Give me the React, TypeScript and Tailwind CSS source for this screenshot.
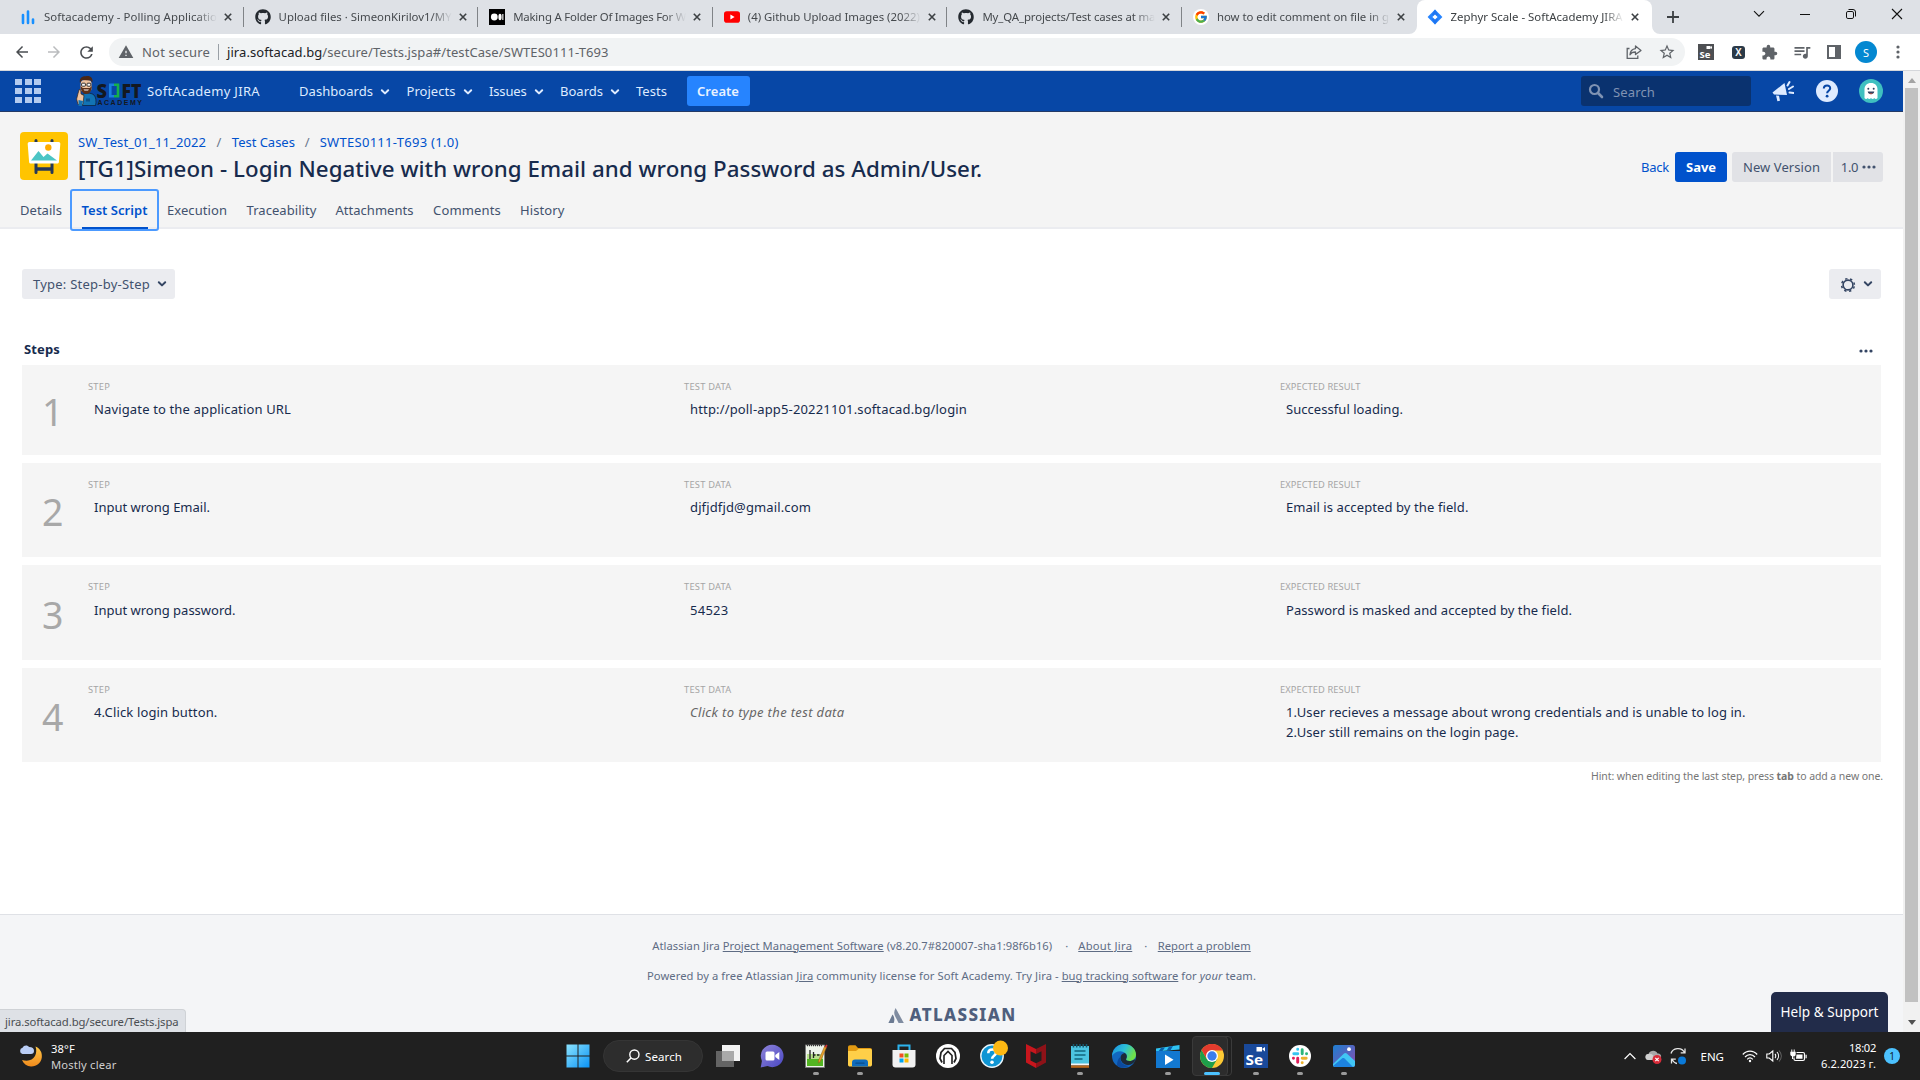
import React, { useLayoutEffect, useRef, useState } from 'react';
import { FaGithub } from 'react-icons/fa';
import { FcGoogle } from 'react-icons/fc';
import {
  MdArrowBack,
  MdArrowForward,
  MdExtension,
  MdQueueMusic,
  MdRefresh,
  MdStarBorder,
  MdWarning,
} from 'react-icons/md';

type TProps = { w?: number; className?: string; children: React.ReactNode };

/* A single line of text whose tracking is tuned so that it spans `w` pixels. */
function T({ w, className = '', children }: TProps) {
  const ref = useRef<HTMLSpanElement>(null);
  const [spacing, setSpacing] = useState(0);
  useLayoutEffect(() => {
    const el = ref.current;
    if (!el || !w) return;
    const count = (el.textContent || '').length;
    const natural = el.getBoundingClientRect().width;
    setSpacing((w - natural) / count);
  }, [w]);
  return (
    <span
      ref={ref}
      className={`inline-block shrink-0 whitespace-pre ${className}`}
      style={{ letterSpacing: `${spacing}px` }}
    >
      {children}
    </span>
  );
}

function Close({ className = '' }: { className?: string }) {
  return (
    <svg viewBox="0 0 10 10" className={`h-2 w-2 shrink-0 ${className}`}>
      <path d="M1 1l8 8M9 1l-8 8" stroke="#3c4043" strokeWidth="2" fill="none" />
    </svg>
  );
}

function Chevron({ className = '' }: { className?: string }) {
  return (
    <svg viewBox="0 0 10 8" className={`h-2 w-2.5 shrink-0 ${className}`}>
      <path d="M1.8 2.2L5 5.4l3.2-3.2" stroke="currentColor" strokeWidth="2" fill="none" strokeLinecap="round" strokeLinejoin="round" />
    </svg>
  );
}

function Dots({ className = '' }: { className?: string }) {
  return (
    <svg viewBox="0 0 14 4" className={`h-1 w-3.5 shrink-0 ${className}`}>
      <circle cx="2" cy="2" r="1.6" fill="currentColor" />
      <circle cx="7" cy="2" r="1.6" fill="currentColor" />
      <circle cx="12" cy="2" r="1.6" fill="currentColor" />
    </svg>
  );
}

/* ---------- Browser tab strip ---------- */

const BarsIcon = () => (
  <svg viewBox="0 0 16 16" className="h-4 w-4">
    <path d="M3 6v8M8 2.5V14M13 10.5V14" stroke="#1890ff" strokeWidth="2.6" strokeLinecap="round" />
  </svg>
);
const MediumIcon = () => (
  <svg viewBox="0 0 16 16" className="h-4 w-4">
    <rect width="16" height="16" fill="#000" />
    <circle cx="5.3" cy="8" r="3.4" fill="#fff" />
    <ellipse cx="11" cy="8" rx="1.6" ry="3.2" fill="#fff" />
    <rect x="13.3" y="5" width="1.1" height="6" fill="#fff" />
  </svg>
);
const YoutubeIcon = () => (
  <svg viewBox="0 0 16 16" className="h-4 w-4">
    <rect y="2.3" width="16" height="11.4" rx="2.8" fill="#f00" />
    <path d="M6.4 5.6L10.6 8l-4.2 2.4z" fill="#fff" />
  </svg>
);
const GoogleIcon = () => (
  <span className="flex h-4 w-4 items-center justify-center rounded-full bg-white">
    <FcGoogle className="h-3.5 w-3.5" />
  </span>
);
const JiraIcon = () => (
  <svg viewBox="0 0 16 16" className="h-4 w-4">
    <path d="M8 .6L15.4 8 8 15.4.6 8z" fill="#2684ff" />
    <path d="M8 .6L11 5.4 8 8 5 5.4zM8 15.4l3-4.8L8 8l-3 2.6z" fill="#1f75f0" />
    <path d="M8 5.4L10.6 8 8 10.6 5.4 8z" fill="#fff" />
  </svg>
);

const TABS = [
  { icon: <BarsIcon />, title: 'Softacademy - Polling Applicatio', w: 173 },
  { icon: <FaGithub className="h-4 w-4 text-[#24292f]" />, title: 'Upload files · SimeonKirilov1/MY', w: 173 },
  { icon: <MediumIcon />, title: 'Making A Folder Of Images For W', w: 173 },
  { icon: <YoutubeIcon />, title: '(4) Github Upload Images (2022)', w: 172 },
  { icon: <FaGithub className="h-4 w-4 text-[#24292f]" />, title: 'My_QA_projects/Test cases at ma', w: 173 },
  { icon: <GoogleIcon />, title: 'how to edit comment on file in g', w: 172 },
];

function TabBody({ icon, title, w }: { icon: React.ReactNode; title: string; w: number }) {
  return (
    <>
      <span className="flex w-4 shrink-0 justify-center">{icon}</span>
      <span className="ml-2 w-[173px] shrink-0 [mask-image:linear-gradient(to_right,black_88%,transparent_100%)]">
        <T w={w}>{title}</T>
      </span>
      <Close className="ml-[7px]" />
    </>
  );
}

function TabStrip() {
  return (
    <div className="flex h-[34px] shrink-0 bg-[#dee1e6] pl-[9px] text-[11.4px] text-[#45494d]">
      {TABS.map((t, i) => (
        <div key={t.title} className="flex w-[234.6px] shrink-0 items-center pl-[11px]">
          <TabBody {...t} />
          {i < 5 && <span className="ml-auto h-5 w-px bg-[#808387]" />}
        </div>
      ))}
      <div className="relative flex w-[235px] shrink-0 items-center rounded-t-lg bg-white pl-[10px] text-[#3c4043]">
        <svg viewBox="0 0 8 8" className="absolute bottom-0 -left-2 h-2 w-2">
          <path d="M8 0v8H0a8 8 0 0 0 8-8z" fill="#fff" />
        </svg>
        <svg viewBox="0 0 8 8" className="absolute -right-2 bottom-0 h-2 w-2">
          <path d="M0 0v8h8a8 8 0 0 1-8-8z" fill="#fff" />
        </svg>
        <TabBody icon={<JiraIcon />} title="Zephyr Scale - SoftAcademy JIRA" w={172} />
      </div>
      <svg viewBox="0 0 12 12" className="mt-[11px] ml-[15px] h-3 w-3">
        <path d="M6 0v12M0 6h12" stroke="#3c4043" strokeWidth="1.8" />
      </svg>
      <div className="mr-[17px] ml-auto flex h-7 items-center text-[#111]">
        <svg viewBox="0 0 12 12" className="mr-[35px] h-3 w-3">
          <path d="M1 3.2l5 5 5-5" stroke="currentColor" strokeWidth="1.1" fill="none" />
        </svg>
        <svg viewBox="0 0 10 10" className="mr-[36px] h-2.5 w-2.5">
          <path d="M0 5.5h10" stroke="currentColor" />
        </svg>
        <svg viewBox="0 0 10 10" className="mr-[35px] h-2.5 w-2.5">
          <rect x=".5" y="2.5" width="7" height="7" rx="1.4" stroke="currentColor" fill="none" />
          <path d="M2.5.5H7A2.5 2.5 0 0 1 9.5 3v4.5" stroke="currentColor" fill="none" />
        </svg>
        <svg viewBox="0 0 12 12" className="h-3 w-3">
          <path d="M1 1l10 10M11 1L1 11" stroke="currentColor" strokeWidth="1.1" />
        </svg>
      </div>
    </div>
  );
}

/* ---------- Address bar ---------- */

function AddressBar() {
  return (
    <div className="flex h-[37px] shrink-0 items-center border-b border-[#d5d7db] bg-white text-[13px] text-[#5f6368]">
      <MdArrowBack className="ml-[13px] h-[18px] w-[18px] text-[#4a4d51]" />
      <MdArrowForward className="ml-[14px] h-[18px] w-[18px] text-[#babcbe]" />
      <MdRefresh className="ml-[14px] h-[19px] w-[19px] text-[#4a4d51]" />
      <div className="ml-[13px] flex h-7 w-[1576px] items-center rounded-full bg-[#f1f3f4]">
        <MdWarning className="ml-[9px] h-4 w-4" />
        <T w={68} className="ml-2 pt-px">Not secure</T>
        <span className="ml-2 h-4 w-px bg-[#9aa0a6]" />
        <T w={381.5} className="ml-[8px] pt-px">
          <span className="text-[#202124]">jira.softacad.bg</span>/secure/Tests.jspa#/testCase/SWTES0111-T693
        </T>
        <svg viewBox="0 0 16 16" className="mr-4 ml-auto h-4 w-4" fill="none" stroke="#5f6368" strokeWidth="1.3">
          <path d="M3.5 4.5H1.2v9.8h10.6v-2.8" />
          <path d="M9.5 2l5.5 4.4-5.5 4.2V8C7 8 5 8.8 4 10.8c.2-3.6 2-5.8 5.5-6.2z" strokeLinejoin="round" />
        </svg>
        <MdStarBorder className="mr-[9px] h-[18px] w-[18px]" />
      </div>
      <svg viewBox="0 0 16 16" className="ml-[13px] h-4 w-4 font-['Open_Sans'] font-bold">
        <rect width="16" height="16" fill="#4d4f52" />
        <rect x="8.5" y="2" width="4" height="3" fill="#fff" />
        <path d="M12 3.5L14 2v3z" fill="#fff" />
        <text x="1.5" y="14" fontSize="9.5" fill="#fff">Se</text>
      </svg>
      <div className="ml-[18px] flex h-[13px] w-[13px] items-center justify-center rounded-[3px] bg-[#2b3a48] text-[10px] leading-none font-semibold text-white">
        X
      </div>
      <MdExtension className="ml-[16px] h-[17px] w-[17px]" />
      <MdQueueMusic className="ml-[14px] h-[20px] w-[20px]" />
      <svg viewBox="0 0 14 14" className="ml-[15px] h-3.5 w-3.5">
        <path d="M1 1h12v12H1z" fill="none" stroke="#5f6368" strokeWidth="2" />
        <path d="M8 1h5v12H8z" fill="#5f6368" />
      </svg>
      <span className="ml-[14px] flex h-[22px] w-[22px] items-center justify-center rounded-full bg-[#0488d1] text-[11px] leading-none text-white">
        S
      </span>
      <svg viewBox="0 0 4 14" className="ml-[19px] h-3.5 w-1">
        <circle cx="2" cy="2" r="1.6" fill="#5f6368" />
        <circle cx="2" cy="7" r="1.6" fill="#5f6368" />
        <circle cx="2" cy="12" r="1.6" fill="#5f6368" />
      </svg>
    </div>
  );
}

/* ---------- Jira header ---------- */

function SoftLogo() {
  return (
    <svg viewBox="0 0 66 32" className="ml-[35px] h-8 w-[66px] shrink-0 overflow-visible">
      <path d="M6 20c3-2.500 9-2.500 12 0 2 2 2.500 7 1.500 10.500H6.500z" fill="#1273b4" stroke="#0b1d33" strokeWidth=".7" />
      <path d="M2 18.500l1.200-4 1.600.4L5 19l3 1.500-1.200 9L2 29.500.6 24z" fill="#efc3a0" stroke="#3a2418" strokeWidth=".7" />
      <path d="M2.500 25l4.500 1-1 5H2.500z" fill="#1273b4" />
      <rect x="4.600" y="5" width="11" height="12" rx="4" fill="#efc3a0" />
      <path d="M4 8C3 3 6 .8 10 1.200 14.500.5 17.300 3 16.300 8L15 5.500 6 5z" fill="#4a2716" />
      <path d="M4.600 11c0 5 2.500 8 5.700 8s5.500-3 5.500-8l-2 2H6.800z" fill="#5c3018" />
      <path d="M7.500 14.400h5.400c-.5 1.600-4.900 1.600-5.400 0z" fill="#fff" />
      <rect x="5.600" y="8.200" width="3.800" height="3" rx=".8" fill="#fff" stroke="#1a1a1a" strokeWidth=".9" />
      <rect x="11" y="8.200" width="3.800" height="3" rx=".8" fill="#fff" stroke="#1a1a1a" strokeWidth=".9" />
      <path d="M10 23.500h4v3h-4z" fill="#0c4f86" />
      <text x="20.500" y="22.500" fontSize="20" fontWeight="800" textLength="10.500" lengthAdjust="spacingAndGlyphs" fill="#14181f" className="font-['Open_Sans']">S</text>
      <path d="M38 9.700H34.300v11.600H38" fill="none" stroke="#1a7fe0" strokeWidth="2.600" />
      <path d="M38 9.700h4v11.600h-4" fill="none" stroke="#16b04a" strokeWidth="2.600" />
      <text x="45.500" y="22.500" fontSize="20" fontWeight="800" textLength="20" lengthAdjust="spacingAndGlyphs" fill="#14181f" className="font-['Open_Sans']">FT</text>
      <text x="21.500" y="30.300" fontSize="7" fontWeight="700" letterSpacing="1.500" fill="#14181f" className="font-['Liberation_Sans']">ACADEMY</text>
    </svg>
  );
}

const NAV = [
  { label: 'Dashboards', w: 74, box: 'w-[107.5px]' },
  { label: 'Projects', w: 49, box: 'w-[82.5px]' },
  { label: 'Issues', w: 37.5, box: 'w-[71px]' },
  { label: 'Boards', w: 43, box: 'w-[76px]' },
];

function JiraHeader() {
  return (
    <div className="flex h-[41px] shrink-0 items-center border-b border-[#243a66] bg-[#0747a6] text-[13px] text-[#deebff]">
      <div className="ml-[15px] grid shrink-0 grid-cols-3 gap-x-[2.5px] gap-y-[3px]">
        {Array.from({ length: 9 }, (_, i) => (
          <span key={i} className="h-1.5 w-[7px] bg-[#b3cbef]" />
        ))}
      </div>
      <SoftLogo />
      <T w={113} className="ml-[5px] pt-0.5">SoftAcademy JIRA</T>
      <div className="ml-[39px] flex">
        {NAV.map((n) => (
          <span key={n.label} className={`flex items-center gap-[7px] ${n.box}`}>
            <T w={n.w} className="pt-0.5">{n.label}</T>
            <Chevron className="mt-px" />
          </span>
        ))}
      </div>
      <T w={31} className="pt-0.5">Tests</T>
      <span className="ml-[19.5px] flex h-[30px] w-[63px] items-center justify-center rounded-[3px] bg-[#2684ff]">
        <T w={42} className="pt-0.5 font-semibold text-[#e9f2ff]">Create</T>
      </span>
      <div className="ml-auto flex h-[30px] w-[170px] items-center rounded-[3px] bg-[#0a326f] text-[#8093b3]">
        <svg viewBox="0 0 16 16" className="ml-[7px] h-4 w-4">
          <circle cx="6.500" cy="6.500" r="4.500" stroke="currentColor" strokeWidth="2.200" fill="none" />
          <path d="M10 10l4 4" stroke="currentColor" strokeWidth="2.600" strokeLinecap="round" />
        </svg>
        <T w={42} className="ml-[9px] pt-1">Search</T>
      </div>
      <svg viewBox="0 0 22 22" className="ml-[21px] h-[22px] w-[22px]" fill="#deebff">
        <path d="M.5 12.500L12.500 3l2.500 12-13-.5z" />
        <path d="M4 15.500l3 .3 1 5-2.600.4z" />
        <path d="M15.500 5.500L17.500 2M17 9l4-2.500M17.500 12.500l4 .5" stroke="#deebff" strokeWidth="2" strokeLinecap="round" />
      </svg>
      <svg viewBox="0 0 22 22" className="ml-[22px] h-[22px] w-[22px]">
        <circle cx="11" cy="11" r="11" fill="#deebff" />
        <path d="M7.800 8.600c.1-4.200 6.600-4 6.400-.2-.1 2.300-3.100 2.300-3.100 4.800" stroke="#0747a6" strokeWidth="2" fill="none" />
        <circle cx="11.100" cy="16.200" r="1.400" fill="#0747a6" />
      </svg>
      <svg viewBox="0 0 24 24" className="mr-[20px] ml-[21px] h-6 w-6">
        <circle cx="12" cy="12" r="12" fill="#3fc0c0" />
        <path d="M5.500 19v-8.500C5.500 6.500 8 4 12 4s6.500 2.500 6.500 6.500V19c-1 1.300-2.400 1.200-3.200 0-1 1.300-2.300 1.300-3.300 0-1 1.300-2.300 1.300-3.300 0-.8 1.200-2.200 1.300-3.200 0z" fill="#fff" />
        <circle cx="9.300" cy="9.700" r="1" fill="#344563" />
        <circle cx="14.700" cy="9.700" r="1" fill="#344563" />
        <path d="M8.700 12.500h6.600c-.4 3.600-6.200 3.600-6.600 0z" fill="#344563" />
        <path d="M10.300 14.600c1 .9 2.500.9 3.400 0z" fill="#ff5630" />
      </svg>
    </div>
  );
}

/* ---------- Test case heading ---------- */

function ProjectAvatar() {
  return (
    <svg viewBox="0 0 48 48" className="h-12 w-12 shrink-0">
      <rect width="48" height="48" rx="4" fill="#ffc400" />
      <path d="M16 8.500v32M32 8.500v32" stroke="#253858" strokeWidth="3" strokeLinecap="round" />
      <path d="M16 37h16" stroke="#253858" strokeWidth="3.500" />
      <path d="M9.500 10h29c1.200 0 2 .8 1.800 2l-1.400 18c-.1 1-1 1.600-1.800 1.600H10.900c-.9 0-1.700-.6-1.800-1.600L7.700 12c-.1-1.200.7-2 1.800-2z" fill="#fff" />
      <path d="M11 28.500l7.500-9.500 5 6 4-3.500 9.500 7z" fill="#4cc5c5" />
      <circle cx="28.300" cy="15.500" r="3.200" fill="#ffab00" />
    </svg>
  );
}

function CaseHeading() {
  return (
    <div className="relative z-10 flex h-[117px] shrink-0 flex-col border-b-2 border-[#ebecf0] bg-[#f4f4f4] text-[13px] text-[#42526e]">
      <div className="mt-5 flex h-12 pl-5">
        <ProjectAvatar />
        <div className="ml-[10px] flex flex-col">
          <div className="flex h-5 items-center pt-0.5 text-[#0052cc]">
            <T w={128}>SW_Test_01_11_2022</T>
            <span className="mx-[10.5px] text-[#6b778c]">/</span>
            <T w={63}>Test Cases</T>
            <span className="mx-[10px] text-[#6b778c]">/</span>
            <T w={139}>SWTES0111-T693 (1.0)</T>
          </div>
          <div className="mt-[2px] flex h-[30px] items-center text-[22.3px] leading-[30px] font-medium text-[#172b4d]">
            <T w={904}>[TG1]Simeon - Login Negative with wrong Email and wrong Password as Admin/User.</T>
          </div>
        </div>
        <div className="mt-[20px] mr-[20px] ml-auto flex h-[30px] items-center">
          <T w={28} className="pt-0.5 text-[#0052cc]">Back</T>
          <span className="ml-[6px] flex h-[30px] w-[52px] items-center justify-center rounded-[3px] bg-[#0052cc] font-bold text-white">
            <T w={30} className="pt-0.5">Save</T>
          </span>
          <span className="ml-[5px] flex h-[30px] w-[99px] items-center justify-center rounded-l-[3px] bg-[#e1e2e6]">
            <T w={77} className="pt-0.5">New Version</T>
          </span>
          <span className="ml-0.5 flex h-[30px] w-[50px] items-center justify-center gap-[4px] rounded-r-[3px] bg-[#e1e2e6] pl-px">
            <T w={17.5} className="pt-0.5">1.0</T>
            <Dots />
          </span>
        </div>
      </div>
      <div className="mt-[9px] flex h-[42px] shrink-0 items-center pl-5">
        <T w={42} className="pt-0.5">Details</T>
        <div className="ml-2 flex h-[42px] w-[89px] flex-col items-center rounded-[3px] border-2 border-[#4c9aff]">
          <span className="flex h-[38px] items-center border-b-2 border-[#0052cc] pt-1 font-semibold text-[#0052cc]">
            <T w={66}>Test Script</T>
          </span>
        </div>
        <T w={60} className="ml-2 pt-0.5">Execution</T>
        <T w={70} className="ml-[19.5px] pt-0.5">Traceability</T>
        <T w={78} className="ml-[19px] pt-0.5">Attachments</T>
        <T w={68} className="ml-[19.5px] pt-0.5">Comments</T>
        <T w={44.5} className="ml-[19px] pt-0.5">History</T>
      </div>
    </div>
  );
}

/* ---------- Steps ---------- */

type Field = { lines: string[]; widths: number[]; hint?: boolean };
const STEPS: { n: number; box: string; body: string; fields: Field[] }[] = [
  {
    n: 1,
    box: 'h-[90px]',
    body: 'mt-[6px]',
    fields: [
      { lines: ['Navigate to the application URL'], widths: [197] },
      { lines: ['http://poll-app5-20221101.softacad.bg/login'], widths: [277] },
      { lines: ['Successful loading.'], widths: [117] },
    ],
  },
  {
    n: 2,
    box: 'h-[94px]',
    body: 'mt-[6px]',
    fields: [
      { lines: ['Input wrong Email.'], widths: [116] },
      { lines: ['djfjdfjd@gmail.com'], widths: [121] },
      { lines: ['Email is accepted by the field.'], widths: [182.5] },
    ],
  },
  {
    n: 3,
    box: 'h-[95px]',
    body: 'mt-[7px]',
    fields: [
      { lines: ['Input wrong password.'], widths: [141.5] },
      { lines: ['54523'], widths: [38.5] },
      { lines: ['Password is masked and accepted by the field.'], widths: [286] },
    ],
  },
  {
    n: 4,
    box: 'h-[94px]',
    body: 'mt-[6px]',
    fields: [
      { lines: ['4.Click login button.'], widths: [123.5] },
      { lines: ['Click to type the test data'], widths: [154.5], hint: true },
      {
        lines: ['1.User recieves a message about wrong credentials and is unable to log in.', '2.User still remains on the login page.'],
        widths: [459.5, 232.5],
      },
    ],
  },
];
const LABELS = [
  { text: 'STEP', w: 22 },
  { text: 'TEST DATA', w: 47.5 },
  { text: 'EXPECTED RESULT', w: 80.5 },
];

function Steps() {
  return (
    <div className="flex flex-col gap-2">
      {STEPS.map((s) => (
        <div key={s.n} className={`flex bg-[#f5f5f5] ${s.box}`}>
          <div className="flex w-[66px] items-center pt-[4px] pl-[20px] text-[37.5px] leading-none text-[#a8a8a8]">{s.n}</div>
          {s.fields.map((f, i) => (
            <div key={LABELS[i].text} className="w-[596px] shrink-0 pt-[16px]">
              <div className="h-3 text-[9.3px] leading-3 text-[#a5a5a5]">
                <T w={LABELS[i].w}>{LABELS[i].text}</T>
              </div>
              <div className={`flex flex-col pl-[6px] text-[13px] leading-5 ${s.body} ${f.hint ? 'text-[#666] italic' : 'text-[#172b4d]'}`}>
                {f.lines.map((line, k) => (
                  <span key={line} className="h-5">
                    <T w={f.widths[k]}>{line}</T>
                  </span>
                ))}
              </div>
            </div>
          ))}
        </div>
      ))}
    </div>
  );
}

function GearIcon() {
  return (
    <svg viewBox="0 0 16 16" className="mt-0.5 h-4 w-4">
      <circle cx="8" cy="8" r="4.9" fill="none" stroke="#344563" strokeWidth="1.6" />
      <circle cx="8" cy="8" r="6.4" fill="none" stroke="#344563" strokeWidth="1.5" strokeDasharray="2.3 2.727" strokeDashoffset="-1.36" />
    </svg>
  );
}

function Content() {
  return (
    <div className="flex flex-1 flex-col bg-white pr-[22px] pl-[22px] text-[13px] text-[#42526e]">
      <div className="mt-[40px] flex h-[30px] justify-between">
        <span className="flex w-[153px] items-center rounded-[3px] bg-[#ebecf0]">
          <T w={117} className="ml-[11px] pt-0.5">Type: Step-by-Step</T>
          <Chevron className="ml-[7px] text-[#344563]" />
        </span>
        <span className="flex w-[52px] items-center rounded-[3px] bg-[#ebecf0] pl-[11px]">
          <GearIcon />
          <Chevron className="ml-[7px] text-[#344563]" />
        </span>
      </div>
      <div className="mt-[40px] flex h-5 items-center justify-between pr-[8px] pl-[2px] text-[#172b4d]">
        <T w={36} className="pt-0.5 font-bold">Steps</T>
        <Dots className="mt-1 text-[#344563]" />
      </div>
      <div className="mt-[6px]">
        <Steps />
      </div>
      <div className="mt-[5px] -mr-0.5 flex h-5 items-center justify-end text-[10.5px] text-[#767676]">
        <T w={292}>
          Hint: when editing the last step, press <b>tab</b> to add a new one.
        </T>
      </div>
    </div>
  );
}

function Footer() {
  return (
    <div className="flex h-[118px] shrink-0 flex-col items-center border-t border-[#dfe1e6] bg-[#f4f5f7] text-[11.2px] text-[#5e6c84]">
      <div className="mt-[21px] flex h-5 items-center">
        <T w={400}>
          Atlassian Jira <span className="underline">Project Management Software</span> (v8.20.7#820007-sha1:98f6b16)
        </T>
        <span className="w-[26px] pl-[13px]">·</span>
        <T w={54} className="underline">About Jira</T>
        <span className="w-[25.5px] pl-[12px]">·</span>
        <T w={93} className="underline">Report a problem</T>
      </div>
      <div className="mt-[10px] flex h-5 items-center">
        <T w={609}>
          Powered by a free Atlassian <span className="underline">Jira</span> community license for Soft Academy. Try Jira - <span className="underline">bug tracking software</span> for <i>your</i> team.
        </T>
      </div>
      <div className="mt-[19px] flex h-5 items-center pl-px">
        <svg viewBox="0 0 16 15" className="h-[15px] w-4">
          <path d="M4.500 6.500c1.800 2 2.500 5 1.200 8.500H.4z" fill="#6b7a92" />
          <path d="M7.600 0L15.800 15h-5.200L7 8C5.800 5.500 6 3 7.600 0z" fill="#7f8ca1" />
        </svg>
        <T w={107} className="ml-[6px] text-[17px] leading-5 font-extrabold text-[#4f5f7d]">ATLASSIAN</T>
      </div>
    </div>
  );
}

function Scrollbar() {
  return (
    <div className="flex w-[17px] shrink-0 flex-col items-center bg-[#f1f1f1]">
      <svg viewBox="0 0 8 5" className="mt-[7px] h-[5px] w-2">
        <path d="M0 5l4-5 4 5z" fill="#a3a3a3" />
      </svg>
      <div className="mt-[5px] h-[914px] w-[13px] bg-[#c1c1c1]" />
      <svg viewBox="0 0 8 5" className="mt-auto mb-[7px] h-[5px] w-2">
        <path d="M0 0l4 5 4-5z" fill="#505050" />
      </svg>
    </div>
  );
}

/* ---------- Windows taskbar ---------- */

const WindowsIcon = () => (
  <svg viewBox="0 0 24 24" className="h-6 w-6">
    <defs>
      <linearGradient id="win" x1="0" y1="0" x2="1" y2="1">
        <stop offset="0" stopColor="#8be3ff" />
        <stop offset="1" stopColor="#0a93f5" />
      </linearGradient>
    </defs>
    <path d="M.5.5h11v11H.5zM12.500.5h11v11h-11zM.5 12.500h11v11H.5zM12.500 12.500h11v11h-11z" fill="url(#win)" />
  </svg>
);
const TaskViewIcon = () => (
  <svg viewBox="0 0 24 24" className="h-6 w-6">
    <rect x="6" y="1" width="18" height="16" fill="#f2f2f2" />
    <rect y="7" width="18" height="16" fill="#6b6b6b" fillOpacity=".9" />
    <rect x="6" y="7" width="12" height="10" fill="#a9a9a9" />
  </svg>
);
const ChatIcon = () => (
  <svg viewBox="0 0 24 24" className="h-6 w-6">
    <defs>
      <linearGradient id="chat" x1="0" y1="0" x2="1" y2="1">
        <stop offset="0" stopColor="#8e83d8" />
        <stop offset="1" stopColor="#4a48c4" />
      </linearGradient>
    </defs>
    <path d="M12.500.8a11.200 11.200 0 1 1-5 21.300L.7 23.400l1.200-6.500A11.200 11.200 0 0 1 12.500.8z" fill="url(#chat)" />
    <rect x="5.500" y="7.500" width="9" height="9" rx="1.500" fill="#fff" />
    <path d="M15.300 11l4-3v8l-4-3z" fill="#fff" />
  </svg>
);
const NotepadPlusIcon = () => (
  <svg viewBox="0 0 24 24" className="h-6 w-6">
    <rect x="1.500" y="1" width="19" height="22.500" fill="#eef3ea" stroke="#777" strokeWidth=".8" />
    <path d="M3 12l16 3v7H3z" fill="#53b522" />
    <path d="M3 10h16v5H3z" fill="#b8e08a" />
    <path d="M6 6v9M9.500 8v6M9 11h2.500M13 11h2.500" stroke="#222" strokeWidth="1.300" />
    <path d="M20.500 2.500L14.500 16.500l-.2 2.500 2-1.600L22.500 3.500z" fill="#e7a02c" stroke="#8a5a12" strokeWidth=".5" />
    <path d="M20.500 2.500l2-2 1 1-1 2.200z" fill="#c33" />
    <path d="M3 1.500h15" stroke="#333" strokeDasharray="1 1" strokeWidth="1.500" />
  </svg>
);
const FolderIcon = () => (
  <svg viewBox="0 0 24 24" className="h-6 w-6">
    <path d="M0 3.500C0 2 .8 1.300 2 1.300h5.500L10 4h12c1.300 0 2 .8 2 2v6H0z" fill="#e29a12" />
    <path d="M0 7h8l2.500-2H22c1.200 0 2 .6 2 1.800v13.900c0 1.200-.8 1.800-2 1.800H2c-1.200 0-2-.6-2-1.800z" fill="#ffcf48" />
    <path d="M4 22.500v-4c0-1.800 1-3 3-3h10c2 0 3 1.200 3 3v4z" fill="#0f6cbd" />
    <path d="M8 19.200h8" stroke="#0a4c8a" strokeWidth="1.300" strokeLinecap="round" />
  </svg>
);
const StoreIcon = () => (
  <svg viewBox="0 0 24 24" className="h-6 w-6">
    <path d="M6.500 7V1.500h11V7" fill="none" stroke="#2cb3ee" strokeWidth="2" />
    <path d="M.5 6h23v14.500c0 2-1 3-3 3h-17c-2 0-3-1-3-3z" fill="#f1f1f1" />
    <path d="M7.500 9.500h4v4h-4z" fill="#f25022" />
    <path d="M12.500 9.500h4v4h-4z" fill="#7fba00" />
    <path d="M7.500 14.500h4v4h-4z" fill="#00a4ef" />
    <path d="M12.500 14.500h4v4h-4z" fill="#ffb900" />
  </svg>
);
const HelmetIcon = () => (
  <svg viewBox="0 0 24 24" className="h-6 w-6">
    <circle cx="12" cy="12" r="12" fill="#fff" />
    <path d="M6 18.500l-2-4 1-6L8.500 4.500h7L19 8.500l1 6-2 4" fill="none" stroke="#202020" strokeWidth="1.700" />
    <path d="M8 20V11.500L12 7.500l4 4V20" fill="none" stroke="#202020" strokeWidth="1.600" />
  </svg>
);
const GetHelpIcon = () => (
  <svg viewBox="0 0 28 28" className="-mt-1 ml-1 h-7 w-7">
    <circle cx="12" cy="16" r="11.200" fill="#0e95d4" stroke="#e8f4fa" strokeWidth="1.400" />
    <path d="M8.300 13.200c.1-5 7.800-4.800 7.600-.2-.1 2.800-3.800 2.800-3.800 5.700" stroke="#fff" strokeWidth="2.600" fill="none" />
    <circle cx="12" cy="22.300" r="1.800" fill="#fff" />
    <circle cx="20.500" cy="8" r="7.500" fill="#fdb813" />
  </svg>
);
const McAfeeIcon = () => (
  <svg viewBox="0 0 24 24" className="h-6 w-6">
    <path d="M2 0l10 5v5l-5.500-2.800v9.300L12 19.200V24L2 18.500z" fill="#c8161d" />
    <path d="M22 0L12 5v5l5.500-2.800v9.300L12 19.200V24l10-5.500z" fill="#8e1218" />
  </svg>
);
const NotepadIcon = () => (
  <svg viewBox="0 0 24 24" className="h-6 w-6">
    <rect x="3" y="2" width="18" height="18" fill="#4cc3e0" />
    <rect x="3" y="19.500" width="18" height="2" fill="#f4f4f4" />
    <rect x="3" y="21.500" width="18" height="2.300" fill="#b8681c" />
    <path d="M5.500 0v3.500M8.700 0v3.500M12 0v3.500M15.200 0v3.500M18.500 0v3.500" stroke="#15586e" strokeWidth="1.500" />
    <path d="M6.500 7h11M6.500 11h11M6.500 15h8" stroke="#12657e" strokeWidth="1.600" />
  </svg>
);
const EdgeIcon = () => (
  <svg viewBox="0 0 24 24" className="h-6 w-6">
    <defs>
      <linearGradient id="edgeTop" x1="0" y1="0" x2="1" y2=".4">
        <stop offset="0" stopColor="#1b8fe0" />
        <stop offset=".55" stopColor="#2cc0d8" />
        <stop offset="1" stopColor="#6fe04a" />
      </linearGradient>
    </defs>
    <circle cx="12" cy="12" r="12" fill="#1267c0" />
    <path d="M0 12C.5 5 5.500 0 12 0c7 0 12 5 12 10.500 0 4-3 6.500-6.500 6.500-3 0-4-1.300-3.200-2.500.9-1.300.9-3.200-.3-4.700C10.500 5.500 3 6.500 0 12z" fill="url(#edgeTop)" />
    <path d="M8.500 14c0-2.500 1.500-4.500 4-5 2.500 1 2.800 4 1.800 5.500-.8 1.200.2 2.500 3.200 2.500 2 0 3.700-.6 5-2l.5 2C21 20 18 21.500 15.500 21c-4-.5-7-3.500-7-7z" fill="#202020" fillOpacity=".85" />
    <path d="M8.500 13c-.7 5 3 9 8.500 8.500-3 2.500-8 3.200-12 .3 0-4 1-7.500 3.500-8.800z" fill="#0c4a9e" />
  </svg>
);
const MoviesIcon = () => (
  <svg viewBox="0 0 24 24" className="h-6 w-6">
    <path d="M0 4.500L23.500 1v4.500L0 7.500z" fill="#2fc3f2" />
    <path d="M5 4l4-.6L6.500 7l-4 .3zM13 2.700l4-.6L14.500 6.300l-4 .4z" fill="#0a5ea8" />
    <rect y="7" width="24" height="17" fill="#1278d0" />
    <path d="M9 10.500l8.500 5.200L9 21z" fill="#fff" />
  </svg>
);
const ChromeIcon = () => (
  <svg viewBox="0 0 24 24" className="h-6 w-6">
    <circle cx="12" cy="12" r="12" fill="#fcc934" />
    <path d="M1.610 6A12 12 0 0 0 12 24l5.200-9L12 12l-5.200 3z" fill="#1e9e4a" />
    <path d="M12 6.500h10.700A12 12 0 0 0 1.610 6l5.200 9z" fill="#e33b2e" />
    <circle cx="12" cy="12" r="6" fill="#fff" />
    <circle cx="12" cy="12" r="4.700" fill="#3b7ded" />
  </svg>
);
const SeleniumIcon = () => (
  <svg viewBox="0 0 24 24" className="h-6 w-6">
    <rect width="24" height="24" fill="#19499a" />
    <rect x="12.500" y="3" width="5.500" height="4.500" fill="#fff" />
    <path d="M18 5l3-2v4.500z" fill="#fff" />
    <text x="1.500" y="21" fontSize="14" fontWeight="700" fill="#fff" textLength="17.500" lengthAdjust="spacingAndGlyphs" className="font-['Open_Sans']">Se</text>
  </svg>
);
const SlackIcon = () => (
  <svg viewBox="0 0 24 24" className="h-6 w-6">
    <circle cx="12" cy="12" r="11" fill="#fff" />
    <g strokeWidth="2.900" strokeLinecap="round">
      <path d="M5.800 9.700h4M9.700 5.300v.1" stroke="#36c5f0" />
      <path d="M14.200 5.800v4M18.500 9.700h.1" stroke="#2eb67d" />
      <path d="M18.200 14.200h-4M14.200 18.600v.1" stroke="#ecb22e" />
      <path d="M9.700 18.200v-4M5.400 14.200h.1" stroke="#e01e5a" />
    </g>
  </svg>
);
const PhotosIcon = () => (
  <svg viewBox="0 0 24 24" className="h-6 w-6">
    <defs>
      <linearGradient id="photo" x1="0" y1="0" x2="1" y2="1">
        <stop offset="0" stopColor="#1d7fd0" />
        <stop offset="1" stopColor="#8a4bb0" />
      </linearGradient>
      <clipPath id="photoClip">
        <rect x="1" y="1" width="22" height="22" rx="2.500" />
      </clipPath>
    </defs>
    <g clipPath="url(#photoClip)">
      <rect x="1" y="1" width="22" height="22" fill="url(#photo)" />
      <path d="M1 20L12 9.500c.8-.8 2-.8 2.800 0L24 18v6H1z" fill="#41c6f4" />
      <path d="M1 22l9-7.500c.8-.6 1.800-.6 2.600 0L22 24H1z" fill="#1d83e0" />
    </g>
    <circle cx="17" cy="5.200" r="1.900" fill="#fff" />
  </svg>
);

const APPS: { icon: React.ReactNode; mark?: 'run' | 'active' }[] = [
  { icon: <TaskViewIcon /> },
  { icon: <ChatIcon /> },
  { icon: <NotepadPlusIcon />, mark: 'run' },
  { icon: <FolderIcon />, mark: 'run' },
  { icon: <StoreIcon /> },
  { icon: <HelmetIcon /> },
  { icon: <GetHelpIcon /> },
  { icon: <McAfeeIcon /> },
  { icon: <NotepadIcon />, mark: 'run' },
  { icon: <EdgeIcon /> },
  { icon: <MoviesIcon />, mark: 'run' },
  { icon: <ChromeIcon />, mark: 'active' },
  { icon: <SeleniumIcon />, mark: 'run' },
  { icon: <SlackIcon />, mark: 'run' },
  { icon: <PhotosIcon />, mark: 'run' },
];

function Taskbar() {
  return (
    <div className="flex h-12 shrink-0 items-center bg-[#202020] text-[11.2px] text-white">
      <svg viewBox="0 0 24 24" className="ml-[19px] h-6 w-6">
        <defs>
          <linearGradient id="moon" x1="0" y1="0" x2="0" y2="1">
            <stop offset="0" stopColor="#ffc84a" />
            <stop offset="1" stopColor="#f08a1c" />
          </linearGradient>
        </defs>
        <path d="M16.500 2.500C21 4.500 23.500 8.500 22.800 13.500 22 19 17.500 22.700 12 22.500c-4-.2-7.200-2.600-9-6.500 6 1.500 10.500.5 13-4 1.500-3 1.700-6.500.5-9.500z" fill="url(#moon)" />
        <path d="M3.500 10a3.200 3.200 0 0 1 0-6.200C4.500 1 8.500.5 10.200 3c3 0 5 1.500 4.800 4 0 1.900-1.200 3-3 3z" fill="#b9cdf5" />
      </svg>
      <div className="ml-[8px] flex w-[514.5px] flex-col items-start pt-px leading-4">
        <T w={24}>38°F</T>
        <T w={65.5} className="text-[#cfcfcf]">Mostly clear</T>
      </div>
      <WindowsIcon />
      <div className="ml-[13.5px] flex h-8 w-[100px] items-center rounded-full border border-[#353535] bg-[#2d2d2d] text-[11.5px]">
        <svg viewBox="0 0 14 14" className="ml-[22px] h-3.5 w-3.5">
          <circle cx="8.400" cy="5.600" r="4.600" stroke="#fff" strokeWidth="1.400" fill="none" />
          <path d="M5.200 8.800L.8 13.200" stroke="#fff" strokeWidth="1.500" />
        </svg>
        <T w={37} className="ml-[5px] pt-px">Search</T>
      </div>
      <div className="ml-[3px] flex">
        {APPS.map((a, i) => (
          <div key={i} className="relative flex h-12 w-11 items-center justify-center">
            {a.mark === 'active' && <span className="absolute top-1 left-[4px] h-10 w-[38px] rounded-[4px] border border-[#3a3a3a]" />}
            {a.mark === 'active' && <span className="absolute top-1 left-[2px] h-10 w-[36px] rounded-[4px] border border-[#3a3a3a] bg-[#2c2c2c]" />}
            <span className="relative flex">{a.icon}</span>
            {a.mark === 'run' && <span className="absolute bottom-[5px] left-[19px] h-[3px] w-1.5 rounded-full bg-[#9a9a9a]" />}
            {a.mark === 'active' && <span className="absolute bottom-[5px] left-[14px] h-[3px] w-4 rounded-full bg-[#4cc2ff]" />}
          </div>
        ))}
      </div>
      <svg viewBox="0 0 12 8" className="ml-auto h-2 w-3">
        <path d="M.6 7L6 1.600 11.400 7" stroke="#fff" strokeWidth="1.200" fill="none" />
      </svg>
      <svg viewBox="0 0 17 16" className="ml-[9px] h-4 w-[17px]">
        <path d="M3.500 12a3 3 0 0 1 0-6C5 2 11 1.500 12.500 5.500c3 0 4 2 3.500 4L14 12z" fill="#a8a8a8" />
        <path d="M3.500 12a3 3 0 0 1 0-6c2-.5 4 .3 5 2l3 4z" fill="#d0d0d0" />
        <circle cx="12" cy="11.500" r="4.500" fill="#d92c3a" />
        <path d="M10.300 9.800l3.400 3.400M13.700 9.800l-3.400 3.400" stroke="#fff" strokeWidth="1.200" />
      </svg>
      <svg viewBox="0 0 17 18" className="ml-[8px] h-[18px] w-[17px]" fill="none" stroke="#e6e6e6" strokeWidth="1.300">
        <path d="M1 6.500C2.500 1 11.500-.5 14.500 5.500M15 1.500v4.300h-4.300" />
        <path d="M1.500 16.500v-4.300h4.300M2 12.500c1.500 2.500 3 3.800 5 4" />
        <circle cx="12" cy="13.500" r="4" fill="#0a7ad9" stroke="none" />
      </svg>
      <T w={23.5} className="ml-[13.5px] pt-0.5 text-[11.5px]">ENG</T>
      <svg viewBox="0 0 16 14" className="ml-[18px] h-3.5 w-4" fill="none" stroke="#fff" strokeWidth="1.200">
        <path d="M.8 5.500c4-4.600 10.400-4.600 14.400 0M3 8c3-3.300 7-3.300 10 0M5.200 10.300c1.700-1.800 3.900-1.800 5.600 0" />
        <circle cx="8" cy="12" r="1.200" fill="#fff" stroke="none" />
      </svg>
      <svg viewBox="0 0 16 14" className="ml-2 h-3.5 w-4" fill="none" stroke="#fff" strokeWidth="1.100">
        <path d="M.8 5v4h2.400L6.800 12V2L3.200 5zM9 5c1 1 1 3 0 4M11 3c2 2.300 2 5.700 0 8" />
        <path d="M13 1.500c3 3.300 3 7.700 0 11" stroke="#666" />
      </svg>
      <svg viewBox="0 0 17 14" className="ml-2 h-3.5 w-[17px]">
        <path d="M6.500 3.500H13c1 0 1.500.5 1.500 1.500v5c0 1-.5 1.500-1.500 1.500H5.500C4.500 11.500 4 11 4 10V8.500" fill="none" stroke="#fff" strokeWidth="1.200" />
        <path d="M6.500 5.500H12.500v4.200H6z" fill="#fff" />
        <path d="M15.500 5.800h1.200v3.400h-1.200zM.3 2.800h5.400v2.400c0 1.500-1 2.300-2.100 2.300H3V10H2V7.300C1 7 .3 6.300.3 5.200zM1.300.5h1v2.300h-1zM3.700.5h1v2.300h-1z" fill="#fff" />
      </svg>
      <div className="ml-[13px] flex w-[56px] flex-col items-end leading-4">
        <T w={27}>18:02</T>
        <T w={55}>6.2.2023 г.</T>
      </div>
      <span className="mr-5 ml-2 flex h-4 w-4 items-center justify-center rounded-full bg-[#4cc2ff] text-[10px] leading-none text-[#10232f]">1</span>
    </div>
  );
}

export default function App() {
  return (
    <div className="relative flex h-[1080px] w-[1920px] flex-col overflow-hidden bg-white font-['Noto_Sans',sans-serif]">
      <TabStrip />
      <AddressBar />
      <div className="flex h-[961px] shrink-0">
        <div className="flex w-[1903px] shrink-0 flex-col">
          <JiraHeader />
          <CaseHeading />
          <Content />
          <Footer />
        </div>
        <Scrollbar />
      </div>
      <Taskbar />
      <div className="absolute bottom-12 left-0 flex h-[23px] w-[186px] items-center rounded-tr-[4px] border-t border-r border-[#cfd2d6] bg-[#dee1e6] pt-0.5 pl-[5px] text-[11.3px] text-[#4a4e52]">
        <T w={173.5}>jira.softacad.bg/secure/Tests.jspa</T>
      </div>
      <div className="absolute right-[32px] bottom-12 flex h-10 w-[117px] items-center justify-center rounded-t-[5px] bg-[#222c4a] text-[13.5px] text-white">
        <T w={98}>Help &amp; Support</T>
      </div>
    </div>
  );
}
